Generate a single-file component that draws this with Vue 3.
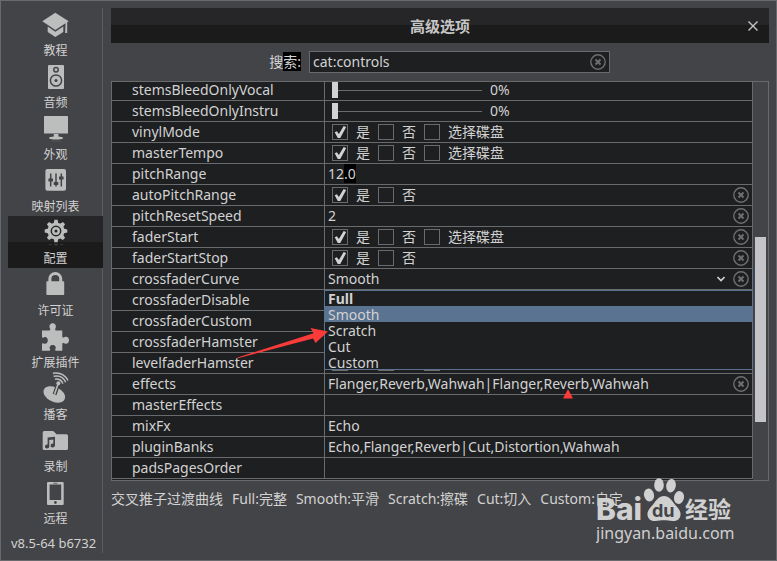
<script setup>
import { ref } from 'vue'

const sections = [
  { id: 'learn', label: '教程' },
  { id: 'audio', label: '音频' },
  { id: 'skin', label: '外观' },
  { id: 'mapping', label: '映射列表' },
  { id: 'config', label: '配置' },
  { id: 'license', label: '许可证' },
  { id: 'plugins', label: '扩展插件' },
  { id: 'podcast', label: '播客' },
  { id: 'record', label: '录制' },
  { id: 'remote', label: '远程' }
]
const current = ref('config')
const search = ref('cat:controls')

const deck = ['是', '否', '选择碟盘']
const yesNo = ['是', '否']
const rows = ref([
  { key: 'stemsBleedOnlyVocal', type: 'range', value: 0 },
  { key: 'stemsBleedOnlyInstru', type: 'range', value: 0 },
  { key: 'vinylMode', type: 'check', options: deck, value: ['是'] },
  { key: 'masterTempo', type: 'check', options: deck, value: ['是'] },
  { key: 'pitchRange', type: 'text', value: '12.0', marked: true },
  { key: 'autoPitchRange', type: 'check', options: yesNo, value: ['是'], clear: true },
  { key: 'pitchResetSpeed', type: 'text', value: '2', clear: true },
  { key: 'faderStart', type: 'check', options: deck, value: ['是'], clear: true },
  { key: 'faderStartStop', type: 'check', options: yesNo, value: ['是'], clear: true },
  { key: 'crossfaderCurve', type: 'select', value: 'Smooth', clear: true },
  { key: 'crossfaderDisable', type: 'text', value: '' },
  { key: 'crossfaderCustom', type: 'text', value: '' },
  { key: 'crossfaderHamster', type: 'text', value: '' },
  { key: 'levelfaderHamster', type: 'check', options: deck, value: [] },
  { key: 'effects', type: 'text', value: 'Flanger,Reverb,Wahwah|Flanger,Reverb,Wahwah', clear: true },
  { key: 'masterEffects', type: 'text', value: '' },
  { key: 'mixFx', type: 'text', value: 'Echo' },
  { key: 'pluginBanks', type: 'text', value: 'Echo,Flanger,Reverb|Cut,Distortion,Wahwah' },
  { key: 'padsPagesOrder', type: 'text', value: '' }
])
const curves = ['Full', 'Smooth', 'Scratch', 'Cut', 'Custom']
const notes = ['交叉推子过渡曲线', 'Full:完整', 'Smooth:平滑', 'Scratch:擦碟', 'Cut:切入', 'Custom:自定']
const scroll = { top: '39%', height: '46.5%' }
const teeth = [0, 45, 90, 135, 180, 225, 270, 315]
</script>

<template>
  <div class="window">
    <nav class="sidebar">
      <button
        v-for="s in sections"
        :key="s.id"
        type="button"
        class="section"
        :class="{ active: s.id === current }"
        @click="current = s.id"
      >
        <svg class="icon" viewBox="0 0 33 33" aria-hidden="true">
          <g v-if="s.id === 'learn'">
            <path d="M16.3 4.7 29.7 13.3 16.3 22 3.3 13.3Z" />
            <path d="M8.7 18.6V24l7.6 5 8-5v-5.4l-8 5.2Z" />
            <path d="M26.6 14h1.6v11h-2Z" />
          </g>
          <g v-else-if="s.id === 'audio'">
            <rect x="9" y="5" width="16" height="24" rx="1" />
            <circle class="line" cx="17" cy="9.8" r="2.2" />
            <circle class="line" cx="17" cy="20.5" r="5.6" />
            <circle class="hole" cx="17" cy="20.5" r="1.6" />
          </g>
          <g v-else-if="s.id === 'skin'">
            <rect x="5" y="4" width="24" height="17.6" rx="0.6" />
            <path d="M14.8 22h4.6v2.6l4.4.6v1.6c-2 1-11.500 1-13.500 0v-1.600l4.500-.6Z" />
            <path class="shade" d="M12 28.500h10v1H12Z" />
          </g>
          <g v-else-if="s.id === 'mapping'">
            <rect x="6.400" y="5" width="20.600" height="21.700" rx="2" />
            <path class="line" d="M11.700 9.500v13M17 9.500v13M22.300 9.500v13" />
            <path class="hole" d="M9.400 14.500H14v3H9.400ZM14.700 18h4.600v3h-4.600ZM20 12.500h4.600v3H20Z" />
          </g>
          <g v-else-if="s.id === 'config'">
            <circle cx="17" cy="15" r="8.600" />
            <path v-for="t in teeth" :key="t" d="M14.600 8 15.400 3.700h3.200L19.400 8Z" :transform="`rotate(${t} 17 15)`" />
            <circle class="line" cx="17" cy="15" r="4.700" />
            <circle class="hole" cx="17" cy="15" r="1.500" />
            <path class="shade" d="M15 27.500h4v2h-4ZM10 28h3v1h-3ZM21 28h3v1h-3Z" />
          </g>
          <g v-else-if="s.id === 'license'">
            <rect x="7.400" y="13.300" width="17.800" height="13.700" rx="0.800" />
            <path class="ring" d="M10.900 14v-3.400a5.300 5 0 0 1 10.800 0V14" />
          </g>
          <g v-else-if="s.id === 'plugins'">
            <path d="M3 10.400h7.200c1.300 0 1.300-.9.800-1.900C9.600 5.600 11.300 3.300 13.700 3.300s4.100 2.300 2.700 5.200c-.5 1-.5 1.900.8 1.900h6.100v6c0 1.300.9 1.500 1.900.9 2.600-1.400 4.800.3 4.800 2.900s-2.200 4.500-4.800 3c-1-.6-1.900-.3-1.900.9v6.600h-6.200c-1 0-1.200-.8-.7-1.700 1.200-2.200-.6-3.900-2.700-3.900s-3.900 1.700-2.700 3.900c.5.900.3 1.700-.7 1.700H3v-6.600c0-1 .8-1.200 1.700-.7 2.300 1.100 4.100-.7 4.100-3s-1.800-4.100-4.100-2.900c-.9.500-1.700.3-1.700-.7Z" />
          </g>
          <g v-else-if="s.id === 'podcast'">
            <ellipse cx="15.300" cy="22.400" rx="11.400" ry="7.400" transform="rotate(25 15.300 22.400)" />
            <path class="line stick" d="M15.600 22.500 18.600 13.500" />
            <path class="ring thin" d="M15.500 22.500 19 12" />
            <circle cx="19.400" cy="11.200" r="2" />
            <path class="ring thin" d="M16 7.200c3.300-.9 6.800.9 7.900 4.400M14.600 4.300c5.300-1.200 9.900.9 12.100 6M13.900 1.200c6.300-1 12 1.400 15.100 7.300" />
          </g>
          <g v-else-if="s.id === 'record'">
            <path d="M3.700 8.500Q3.700 7 5.200 7h8.300q1.200 0 1.800 1l2.200 2.200H27.500q1.500 0 1.500 1.500V24.500q0 1.500-1.500 1.500H5.200q-1.500 0-1.500-1.500Z" />
            <path class="hole" d="M8.600 13.600 16 12.700v8.600a2.200 2 0 1 1-1.700-1.800v-4l-4 .5v6.500a2.200 2 0 1 1-1.700-1.900Z" />
          </g>
          <g v-else>
            <rect x="8" y="6" width="16.700" height="23" rx="1" />
            <rect class="hole" x="10.600" y="8.500" width="11.600" height="15.500" />
            <circle class="hole" cx="16.400" cy="26.500" r="1.400" />
            <path class="hole" d="M14.500 6.800h3.800v.8h-3.800Z" />
          </g>
        </svg>
        <span class="section-label">{{ s.label }}</span>
      </button>
      <p class="version">v8.5-64 b6732</p>
    </nav>

    <main class="panel">
      <header class="titlebar">
        <h1>高级选项</h1>
        <button type="button" class="close" aria-label="关闭">
          <svg viewBox="0 0 10 10" aria-hidden="true"><path d="M0.500 0.500 9.500 9.500M9.500 0.500 0.500 9.500" /></svg>
        </button>
      </header>

      <div class="search">
        <label for="search">搜<mark>索:</mark></label>
        <div class="search-box">
          <input id="search" v-model="search" type="text" />
          <button type="button" class="clear" aria-label="清除" @click="search = ''">
            <svg viewBox="0 0 16 16" aria-hidden="true"><circle cx="8" cy="8" r="7.200" /><path d="M5.500 5.500l5 5M10.500 5.500l-5 5" /></svg>
          </button>
        </div>
      </div>

      <div class="options">
        <div class="viewport">
          <table>
            <tbody>
              <tr v-for="r in rows" :key="r.key">
                <th scope="row"><label :for="r.key">{{ r.key }}</label></th>
                <td :class="{ open: r.type === 'select' }">
                  <div class="cell">
                    <template v-if="r.type === 'range'">
                      <input :id="r.key" v-model="r.value" class="slider" type="range" min="0" max="100" />
                      <output :for="r.key">{{ r.value }}%</output>
                    </template>
                    <div v-else-if="r.type === 'check'" class="checks">
                      <label v-for="(o, i) in r.options" :key="o">
                        <input :id="i === 0 ? r.key : r.key + i" v-model="r.value" type="checkbox" :value="o" />{{ o }}
                      </label>
                    </div>
                    <select v-else-if="r.type === 'select'" :id="r.key" v-model="r.value">
                      <option v-for="c in curves" :key="c">{{ c }}</option>
                    </select>
                    <input v-else :id="r.key" v-model="r.value" class="text" :class="{ marked: r.marked }" type="text" />
                    <svg v-if="r.type === 'select'" class="chevron" viewBox="0 0 8 6" aria-hidden="true"><path d="M0.500 1 4 4.500 7.500 1" /></svg>
                    <button v-if="r.clear" type="button" class="clear" aria-label="清除">
                      <svg viewBox="0 0 16 16" aria-hidden="true"><circle cx="8" cy="8" r="7.200" /><path d="M5.500 5.500l5 5M10.500 5.500l-5 5" /></svg>
                    </button>
                  </div>
                  <ul v-if="r.type === 'select'" class="menu" role="listbox">
                    <li
                      v-for="c in curves"
                      :key="c"
                      role="option"
                      :aria-selected="c === r.value"
                      :class="{ picked: c === r.value, standard: c === 'Full' }"
                      @click="r.value = c"
                    >{{ c }}</li>
                  </ul>
                </td>
              </tr>
            </tbody>
          </table>
        </div>
        <div class="track">
          <div class="thumb" :style="scroll"></div>
        </div>
      </div>

      <p class="notes"><span v-for="n in notes" :key="n">{{ n }}</span></p>
    </main>

    <svg class="arrow" viewBox="0 0 94 32" aria-hidden="true">
      <path d="M1.500 30.500 77.500 6.200 74.500 1 92 4.500 79.500 16 77 11.500 2 31.200Z" />
    </svg>
    <svg class="pointer" viewBox="0 0 10 10" aria-hidden="true"><path d="M5 0 10 9.500H0Z" /></svg>

    <svg class="watermark" viewBox="0 0 140 72">
      <text class="brand" x="0" y="44">Bai</text>
      <ellipse cx="53" cy="19" rx="5" ry="6.500" transform="rotate(-12 53 19)" />
      <ellipse cx="63" cy="9" rx="4.800" ry="6.800" />
      <ellipse cx="75" cy="9.700" rx="4.800" ry="6.800" transform="rotate(10 75 9.700)" />
      <ellipse cx="83" cy="21.500" rx="5" ry="6.500" transform="rotate(12 83 21.500)" />
      <path d="M68 20c5 0 7.500 4 10.500 8 3 3.500 6.500 6.500 6 11-.5 4.500-4 6.300-8 6.100-3-.2-5.500-.8-8.500-.8s-5.500.6-8.500.8c-4 .2-7.500-1.600-8-6.100-.5-4.500 3-7.500 6-11 3-4 5.500-8 10.500-8Z" />
      <text class="du" x="56" y="41">du</text>
      <text class="cn" x="89" y="42">经验</text>
      <text class="url" x="0" y="63">jingyan.baidu.com</text>
    </svg>
  </div>
</template>

<style>
body {
  margin: 0;
  background: #434447;
}
</style>

<style scoped>
* {
  box-sizing: border-box;
}

.window {
  position: relative;
  display: flex;
  gap: 8px;
  min-height: 100vh;
  padding: 7px;
  border: 1px solid #696a6e;
  background: #434447;
  color: #d2d2d2;
  font: 14px/20px "Noto Sans", "Noto Sans CJK SC", sans-serif;
}

button,
input,
select {
  margin: 0;
  padding: 0;
  border: 0;
  background: none;
  color: inherit;
  font: inherit;
}

h1,
p,
ul {
  margin: 0;
  padding: 0;
}

/* Sidebar */
.sidebar {
  display: flex;
  flex: 0 0 95px;
  flex-direction: column;
  background: linear-gradient(#5c5d61, #5c5d61) right / 1px 100% no-repeat;
}

.section {
  display: flex;
  flex-direction: column;
  align-items: center;
  height: 52px;
}

.section.active {
  background: linear-gradient(#262628 50%, #1b1b1c 50%);
  --cut: #262628;
}

.section-label {
  font-size: 12px;
  line-height: 19px;
}

.icon {
  width: 33px;
  height: 33px;
  fill: #bcbebe;
}

.icon .hole {
  fill: var(--cut, #434447);
}

.icon .line {
  fill: none;
  stroke: var(--cut, #434447);
  stroke-width: 1.5;
}

.icon .stick {
  stroke-width: 4;
}

.icon .ring {
  fill: none;
  stroke: #bcbebe;
  stroke-width: 3;
}

.icon .thin {
  stroke-width: 1.5;
}

.icon .shade {
  fill: #77797a;
  opacity: 0.3;
}

.version {
  padding: 6px 0 0 3px;
  font-size: 13px;
  line-height: 18px;
  white-space: nowrap;
}

/* Panel */
.panel {
  display: flex;
  flex: 1;
  flex-direction: column;
  gap: 8px;
  min-width: 0;
}

.titlebar {
  display: grid;
  grid-template-columns: 32px 1fr 32px;
  align-items: center;
  height: 35px;
  background: linear-gradient(#262628 50%, #1b1b1c 50%);
}

.titlebar h1 {
  grid-column: 2;
  color: #c6c6c6;
  font-size: 15px;
  text-align: center;
}

.close {
  display: grid;
  place-items: center;
  height: 32px;
}

.close svg {
  width: 10px;
  height: 10px;
  stroke: #c6c6c6;
  stroke-width: 1.4;
}

.search {
  display: grid;
  grid-template-columns: 198fr 301fr 159fr;
  height: 22px;
}

.search > label {
  padding-right: 8px;
  line-height: 22px;
  text-align: right;
}

mark {
  background: #000;
  color: inherit;
}

.search-box {
  display: flex;
  align-items: center;
  padding: 0 3px;
  border: 1px solid #696a6e;
  background: #1e1f21;
}

.search-box input {
  flex: 1;
  min-width: 0;
  height: 20px;
}

.clear {
  display: block;
  flex: none;
  width: 16px;
  height: 16px;
}

.clear svg {
  display: block;
  fill: none;
  stroke: #6e6f6f;
  stroke-width: 1.4;
}

.clear path {
  stroke-width: 2;
}

/* Options table */
.options {
  display: flex;
  flex: 1;
  border: 1px solid #696a6e;
}

.viewport {
  display: flex;
  flex: 1;
  flex-direction: column;
  justify-content: flex-end;
  height: 398px;
  min-width: 0;
  padding-bottom: 1px;
  overflow: hidden;
  background: #1e1f21;
}

table {
  width: 100%;
  border-spacing: 0;
  table-layout: fixed;
}

th,
td {
  height: 21px;
  padding: 0;
  border-right: 1px solid #696a6e;
  border-bottom: 1px solid #696a6e;
}

th {
  width: 213px;
  padding-left: 20px;
  font-weight: 400;
  text-align: left;
}

th label {
  display: block;
}

td {
  position: relative;
}

td.open {
  border-right-color: #5a7391;
}

.cell {
  display: flex;
  align-items: center;
  height: 20px;
  padding: 0 3px;
}

.text,
.cell select {
  flex: 1;
  min-width: 0;
  height: 20px;
  appearance: none;
}

.marked {
  background: linear-gradient(#000, #000) 16px 0 / 12px 19px no-repeat;
}

.slider {
  width: 150px;
  height: 16px;
  margin: 0 8px 0 4px;
  appearance: none;
  background: linear-gradient(#696a6e, #696a6e) center / 100% 1px no-repeat;
}

.slider::-webkit-slider-thumb {
  width: 6px;
  height: 16px;
  appearance: none;
  background: #d2d2d2;
}

.checks {
  display: flex;
  flex: 1;
  gap: 8px;
  padding-left: 4px;
}

.checks label {
  display: flex;
  gap: 8px;
  align-items: center;
}

.checks input {
  width: 16px;
  height: 16px;
  border: 1px solid #696a6e;
  appearance: none;
}

.checks input:checked::before {
  display: block;
  width: 14px;
  height: 14px;
  background: #d2d2d2;
  clip-path: polygon(12% 52%, 28% 44%, 42% 64%, 76% 8%, 94% 14%, 52% 92%, 34% 92%);
  content: "";
}

.chevron {
  width: 8px;
  height: 6px;
  margin-right: 8px;
  fill: none;
  stroke: #d2d2d2;
  stroke-width: 1.6;
}

.menu {
  position: absolute;
  z-index: 1;
  top: 21px;
  right: -1px;
  left: -1px;
  outline: 1px solid #5a7391;
  outline-offset: -1px;
  background: #1e1f21;
  list-style: none;
}

.menu li {
  height: 16px;
  padding-left: 4px;
  line-height: 18px;
}

.menu .picked {
  background: #5a7391;
}

.menu .standard {
  font-weight: 700;
}

.track {
  position: relative;
  flex: 0 0 15px;
}

.thumb {
  position: absolute;
  right: 2px;
  left: 2px;
  background: #c3c3c8;
}

.notes {
  display: flex;
  flex: 0 0 64px;
  flex-wrap: wrap;
  gap: 9px;
  align-content: flex-start;
}

/* Annotations over the panel */
.arrow,
.pointer,
.watermark {
  position: absolute;
  z-index: 2;
  pointer-events: none;
}

.arrow,
.pointer {
  fill: #fb3b3a;
}

.arrow {
  top: 326px;
  left: 235px;
  width: 94px;
  height: 32px;
}

.pointer {
  top: 388px;
  left: 562px;
  width: 10px;
  height: 10px;
}

.watermark {
  right: 40px;
  bottom: 12px;
  width: 140px;
  height: 72px;
  fill: #d0d0d1;
}

.brand {
  font: 800 30px Inter, sans-serif;
}

.du {
  fill: #434447;
  font: 700 18px Inter, sans-serif;
}

.cn {
  font: 700 23px "Noto Sans CJK SC", sans-serif;
}

.url {
  font: 16px "Noto Sans", sans-serif;
}
</style>
